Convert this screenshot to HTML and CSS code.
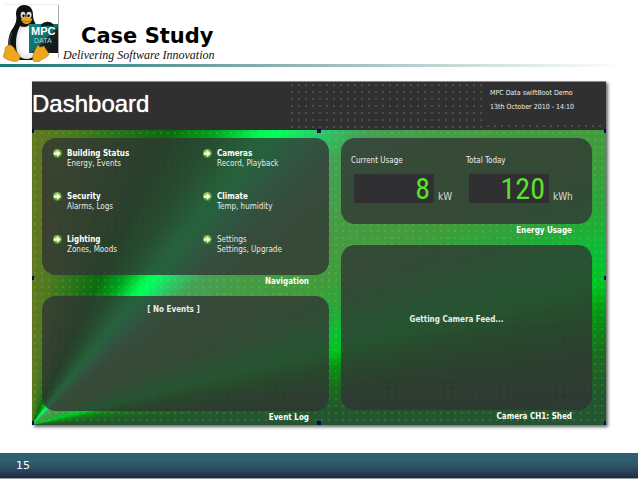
FILE: index.html
```html
<!DOCTYPE html>
<html lang="en">
<head>
<meta charset="utf-8">
<title>Case Study</title>
<link rel="stylesheet" href="styles.css">
</head>
<body>
<svg class="defs" aria-hidden="true">
  <defs>
    <radialGradient id="ball" cx="40%" cy="35%" r="65%">
      <stop offset="0" stop-color="#b4dc78"/>
      <stop offset="1" stop-color="#3f8a1e"/>
    </radialGradient>
    <symbol id="go" viewBox="0 0 16 16">
      <circle cx="8" cy="8" r="8" fill="url(#ball)"/>
      <path d="M1.500 6h5.500V2L14 8l-7 6V10H1.500z" fill="#fbffe8"/>
    </symbol>
  </defs>
</svg>
<header class="slide-head">
  <svg class="logo" viewBox="0 0 56 58" role="img" aria-label="MPC Data">
    <defs>
      <linearGradient id="board" x1="0" y1="0" x2="1" y2="1">
        <stop offset="0" stop-color="#118783"/>
        <stop offset=".52" stop-color="#0d6f6e"/>
        <stop offset=".58" stop-color="#142424"/>
        <stop offset="1" stop-color="#101414"/>
      </linearGradient>
      <radialGradient id="belly" cx="50%" cy="50%" r="60%">
        <stop offset=".5" stop-color="#fff"/>
        <stop offset="1" stop-color="#d5d5d8"/>
      </radialGradient>
    </defs>
    <path d="M2 .5h53.500" fill="none" stroke="#eee"/>
    <path d="M55.500 1v53" stroke="#aaa"/>
    <path d="M13 10C13 4 17 1 21 1c6 0 9 4 9 10 0 7 4 10 7 16 4 8 4 17 1 23l-9 6H16L6 46C4 38 6 29 10 24c3-5 4-8 3-14z" fill="#101113"/>
    <path d="M17 22c4 2 8 1 10-2 5 7 8 13 8 21 0 9-5 14-11 14-8 0-11-6-11-15 0-7 1-12 4-18z" fill="url(#belly)"/>
    <path d="M9 29c-3 5-3 10-1 15" fill="none" stroke="#55565c" stroke-width="1"/>
    <ellipse cx="20" cy="11" rx="2.400" ry="3.200" fill="#ddd"/>
    <ellipse cx="26" cy="11" rx="2.600" ry="3.200" fill="#ddd"/>
    <circle cx="20.500" cy="11.700" r="1.200"/>
    <circle cx="25.500" cy="11.700" r="1.300"/>
    <path d="M18 15c2-2 4-3 6-2 2 0 4 1 5.500 2.500-1 2.500-3.500 4.500-6 4.500S18.500 18 18 15z" fill="#e9a51b"/>
    <path d="M18.500 16.500c3 1.500 7 1.500 10.500 0" fill="none" stroke="#8a5a08" stroke-width=".7"/>
    <rect x="26" y="20" width="29" height="29" fill="url(#board)"/>
    <path d="M38 21c3-4 9-4 12-1l1 3c-4-2-8-1-13 0z" fill="#151719"/>
    <text x="28" y="31" class="logo-mpc">MPC</text>
    <text x="31" y="39" class="logo-data">DATA</text>
    <path d="M4 42c2-2 5-1 7 2 2 4 5 6 6 9 0 4-4 5-8 4-3-1-7-2-8.500-4C0 51 2 49 2 47c0-2 0-4 2-5z" fill="#efa71b" stroke="#a87312" stroke-width=".6"/>
    <path d="M35 41c1 2 3 3 6 1 2 4 4 6 5 8-1 3-5 4-8 6-3 3-7 3-8 0-1-4 1-7 2-10z" fill="#efa71b" stroke="#a87312" stroke-width=".6"/>
  </svg>
  <div class="titles">
    <h1 class="title">Case Study</h1>
    <p class="tagline">Delivering Software Innovation</p>
  </div>
</header>
<div class="rule"></div>

<main class="dashboard">
  <header class="dash-head">
    <h2 class="dash-title">Dashboard</h2>
    <div class="dots"></div>
    <div class="dash-info">
      <p>MPC Data swiftBoot Demo</p>
      <p>13th October 2010 - 14:10</p>
    </div>
  </header>
  <div class="board">
    <div class="column">
      <nav class="panel nav">
        <a class="item" href="#status"><svg class="go"><use href="#go"/></svg><span><b>Building Status</b><br>Energy, Events</span></a>
        <a class="item" href="#cameras"><svg class="go"><use href="#go"/></svg><span><b>Cameras</b><br>Record, Playback</span></a>
        <a class="item" href="#security"><svg class="go"><use href="#go"/></svg><span><b>Security</b><br>Alarms, Logs</span></a>
        <a class="item" href="#climate"><svg class="go"><use href="#go"/></svg><span><b>Climate</b><br>Temp, humidity</span></a>
        <a class="item" href="#lighting"><svg class="go"><use href="#go"/></svg><span><b>Lighting</b><br>Zones, Moods</span></a>
        <a class="item" href="#settings"><svg class="go"><use href="#go"/></svg><span>Settings<br>Settings, Upgrade</span></a>
      </nav>
      <h3 class="caption">Navigation</h3>
      <section class="panel events">[ No Events ]</section>
      <h3 class="caption caption-last">Event Log</h3>
    </div>
    <div class="column">
      <section class="panel energy">
        <div class="meter">
          <span class="meter-name">Current Usage</span>
          <div class="reading"><output class="lcd">8</output><span class="unit">kW</span></div>
        </div>
        <div class="meter">
          <span class="meter-name">Total Today</span>
          <div class="reading"><output class="lcd">120</output><span class="unit">kWh</span></div>
        </div>
      </section>
      <h3 class="caption">Energy Usage</h3>
      <section class="panel camera">Getting Camera Feed...</section>
      <h3 class="caption caption-last">Camera CH1: Shed</h3>
    </div>
    <i class="handle top left"></i><i class="handle top center"></i><i class="handle top right"></i>
    <i class="handle middle left"></i><i class="handle middle right"></i>
    <i class="handle bottom left"></i><i class="handle bottom center"></i><i class="handle bottom right"></i>
  </div>
</main>

<footer class="slide-foot">15</footer>
</body>
</html>
```
FILE: styles.css
```css
* { box-sizing: border-box; }

body {
  margin: 0;
  min-height: 100vh;
  display: flex;
  flex-direction: column;
  background: #fff;
  font-family: "DejaVu Sans Condensed", "DejaVu Sans", sans-serif;
}

h1, h2, h3, p { margin: 0; }

.defs { position: absolute; width: 0; height: 0; }

/* Slide header */
.slide-head {
  display: flex;
  gap: 4px;
  padding: 4px 3px 2px;
}
.logo { width: 56px; height: 58px; }
.logo-mpc { font: bold 11px "Liberation Sans", sans-serif; fill: #fff; }
.logo-data { font: 7px "Liberation Sans", sans-serif; fill: #b9cfcf; }
.titles { padding-top: 20px; }
.title {
  padding-left: 18px;
  font: bold 21px/24px "DejaVu Sans", sans-serif;
  color: #000;
}
.tagline {
  font: italic 12px/14px "Liberation Serif", serif;
  color: #111;
}
.rule {
  height: 3px;
  background: linear-gradient(90deg, #1b7674, #8fb3b3 45%, #fff 98%);
}

/* Dashboard */
.dashboard {
  margin: 14px 32px 0;
  box-shadow: 2px 2px 3px rgba(0, 0, 0, .6);
  color: #eee;
  font-size: 8px;
  line-height: 10px;
}
.dash-head {
  display: grid;
  grid-template-columns: 257fr 196fr 121fr;
  min-height: 49px;
  background: #303030;
  border-top: 1px solid #8a8a8a;
}
.dash-title {
  padding-top: 8px;
  font: 24px/28px "Liberation Sans", sans-serif;
  color: #fff;
  text-shadow: 0 0 1px #fff;
}
.dots {
  background: radial-gradient(circle at 3px 3px, #4c4c4c 0, #4c4c4c 1px, transparent 1px) 0 0 / 7px 7px;
}
.dash-info {
  display: flex;
  flex-direction: column;
  gap: 4px;
  padding: 6px 0 0 5px;
  background: radial-gradient(circle at 3px 3px, #4c4c4c 0, #4c4c4c 1px, transparent 1px) 0 100% / 7px 7px repeat-x;
  font: 7px/10px "DejaVu Sans Condensed", "DejaVu Sans", sans-serif;
}

.board {
  position: relative;
  display: grid;
  grid-template-columns: 287fr 251fr;
  gap: 12px;
  padding: 8px 14px 0 10px;
  background:
    radial-gradient(circle at 3px 3px, rgba(200, 255, 180, .12) 0, rgba(200, 255, 180, .12) 1px, transparent 1px) 0 0 / 7px 7px,
    conic-gradient(from 0deg at 0 100%,
      #627820 0deg, #4c7a20 7deg, #2a741b 16deg, #0a6c0d 25deg,
      #00a51e 32deg, #00f84d 38deg, #00ff5c 40deg, #28cf68 44deg,
      #46a055 49deg, #469b43 57deg, #429c3b 64deg, #2ba53a 69deg,
      #0cbd35 73deg, #00c522 76deg, #079412 79deg, #1b6b20 83deg,
      #22572b 87deg, #255434 90deg, #255434 360deg);
}
.column { display: flex; flex-direction: column; }
.panel {
  border-radius: 14px;
  background: rgba(50, 49, 52, .77);
}
.caption {
  padding: 2px 20px 0 0;
  min-height: 21px;
  font: bold 8px/10px "DejaVu Sans Condensed", "DejaVu Sans", sans-serif;
  text-align: right;
  color: #fff;
}
.caption-last { min-height: 14px; }

.nav {
  display: grid;
  grid-template-columns: 150fr 126fr;
  grid-template-rows: 43px 43px auto;
  min-height: 137px;
  padding: 11px 0 0 11px;
}
.item {
  display: flex;
  align-items: flex-start;
  gap: 5px;
  color: #e8eae8;
  text-decoration: none;
}
.item b { color: #fff; }
.go { width: 9px; height: 9px; }

.events {
  min-height: 115px;
  padding: 9px 24px 0 0;
  font-weight: bold;
  text-align: center;
}

.energy {
  display: grid;
  grid-template-columns: 115fr 126fr;
  min-height: 86px;
  padding: 18px 0 0 10px;
}
.reading {
  display: flex;
  align-items: flex-end;
  gap: 4px;
  padding: 8px 0 0 3px;
}
.lcd {
  width: 80px;
  height: 29px;
  padding-right: 4px;
  background: #302f31;
  color: #5be32a;
  font: 30px/29px "Roboto Condensed", "Roboto", sans-serif;
  font-stretch: condensed;
  text-align: right;
}
.unit { font-size: 10px; line-height: 12px; color: #d5dcd5; }

.camera {
  min-height: 165px;
  padding: 70px 20px 0 0;
  font-weight: bold;
  text-align: center;
}

/* Selection handles round the board */
.handle {
  position: absolute;
  width: 4px;
  height: 4px;
  background: #040a5c;
}
.top { top: -1px; }
.middle { top: calc(50% - 2px); }
.bottom { bottom: 0; }
.left { left: 0; width: 2px; }
.center { left: calc(50% - 2px); }
.right { right: 0; width: 2px; }

/* Slide footer */
.slide-foot {
  margin-top: auto;
  padding: 6px 16px 5px;
  border-bottom: 1px solid #9aa0a6;
  background: linear-gradient(#2c6070, #2e5f70 30%, #2c4e64 60%, #1e2b40);
  color: #fff;
  font: 11px/14px "DejaVu Sans", sans-serif;
}
```
